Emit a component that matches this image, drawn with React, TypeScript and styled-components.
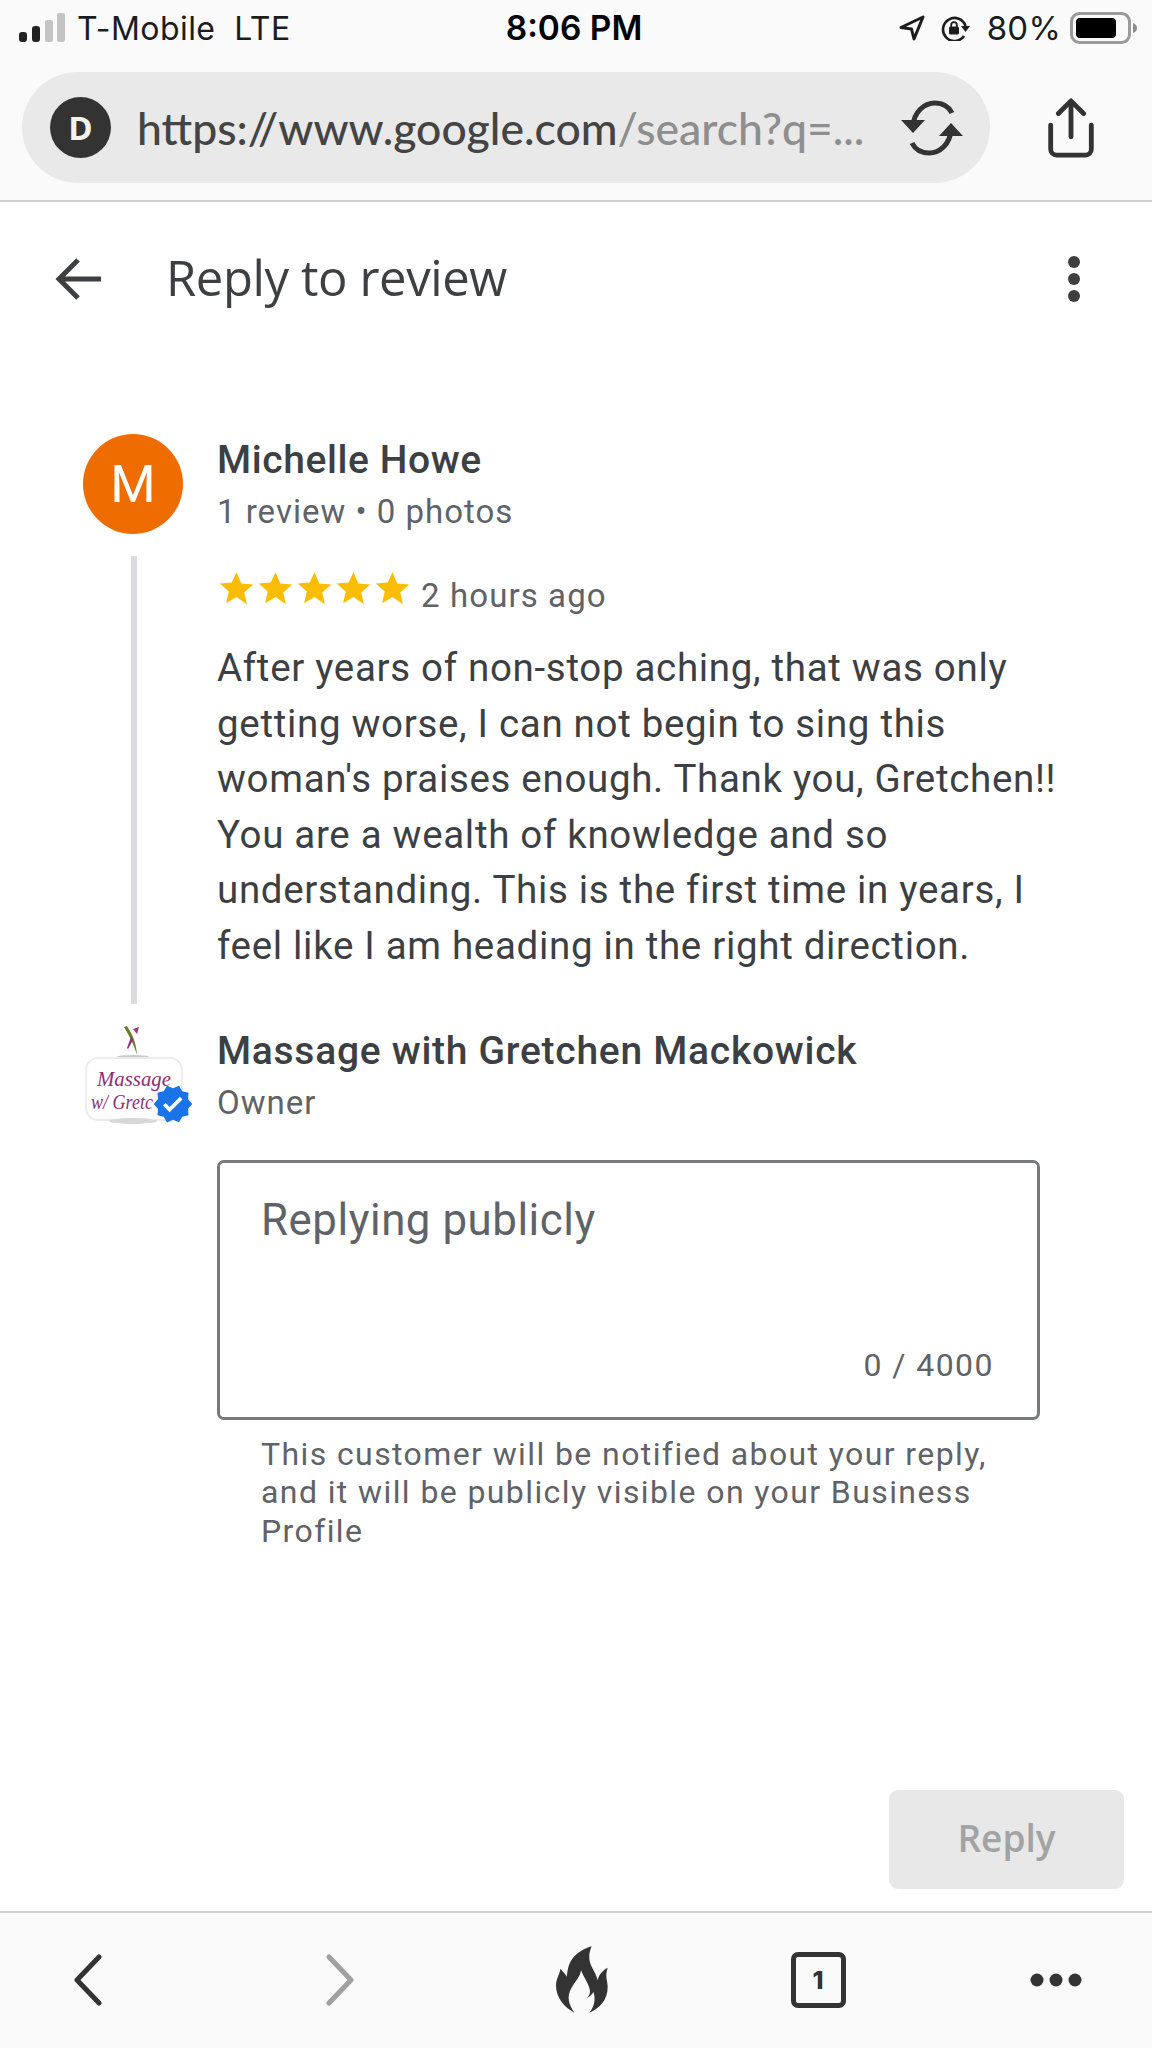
import React from "react";
import styled, { createGlobalStyle } from "styled-components";

const GlobalStyle = createGlobalStyle`
  html, body { margin: 0; padding: 0; background: #fff; }
  * { box-sizing: border-box; }
`;

const Page = styled.div`
  width: 1152px;
  height: 2048px;
  display: flex;
  flex-direction: column;
  overflow: hidden;
  background: #fff;
  font-family: Roboto, "Liberation Sans", sans-serif;
`;

const Chrome = styled.header`
  height: 202px;
  flex: none;
  background: #fafafa;
  border-bottom: 2px solid #cfcfcf;
  display: flex;
  flex-direction: column;
`;

const StatusBar = styled.div`
  height: 72px;
  display: grid;
  grid-template-columns: 1fr auto 1fr;
  align-items: center;
  padding: 0 15px 16px 19px;
  font-family: Inter, sans-serif;
  font-size: 32px;
  color: #1c1c1c;
`;

const StatusGroup = styled.div<{ $end?: boolean }>`
  display: flex;
  align-items: center;
  justify-content: ${(p) => (p.$end ? "flex-end" : "flex-start")};
  gap: ${(p) => (p.$end ? "16px" : "12px")};
`;

const Carrier = styled.span`
  letter-spacing: 0.45px;
  white-space: pre;
`;

const Percent = styled.span`
  font-size: 33px;
  letter-spacing: 0.2px;
`;

const BatteryIcon = styled.svg`
  margin-left: -7px;
`;

const Clock = styled.span`
  font-family: Inter, sans-serif;
  font-weight: 600;
  font-size: 33.5px;
  margin-left: -8px;
  color: #000;
`;

const UrlRow = styled.div`
  display: flex;
  align-items: center;
  padding-left: 22px;
`;

const UrlPill = styled.div`
  width: 968px;
  height: 111px;
  border-radius: 56px;
  background: #e9e9e9;
  display: flex;
  align-items: center;
  padding: 0 26px 0 28px;
`;

const SiteBadge = styled.div`
  width: 61px;
  height: 61px;
  flex: none;
  border-radius: 50%;
  background: #333;
  color: #f2f2f2;
  font-family: "Open Sans", sans-serif;
  font-weight: 700;
  font-size: 33px;
  display: flex;
  align-items: center;
  justify-content: center;
`;

const UrlText = styled.div`
  flex: 1;
  margin-left: 26px;
  font-family: Lato, sans-serif;
  font-size: 44.5px;
  font-weight: 500;
  color: #444;
  white-space: nowrap;
`;

const UrlMuted = styled.span`
  color: #8e8e8e;
`;

const ShareButton = styled.div`
  margin-left: 57px;
  width: 48px;
  display: flex;
`;

const TopBar = styled.div`
  height: 154px;
  flex: none;
  display: flex;
  align-items: center;
  padding: 0 72px 0 55px;
`;

const Title = styled.h1`
  flex: 1;
  margin: 0 0 5px 65px;
  font-family: "Open Sans", sans-serif;
  font-weight: 400;
  font-size: 49px;
  letter-spacing: -0.4px;
  color: #3c4043;
`;

const Content = styled.main`
  flex: 1;
  display: flex;
  flex-direction: column;
  padding: 78px 28px 22px 83px;
`;

const Row = styled.section`
  display: grid;
  grid-template-columns: 100px 1fr;
  column-gap: 34px;
`;

const OwnerRow = styled(Row)`
  margin-top: 21px;
`;

const Avatar = styled.div`
  width: 100px;
  height: 100px;
  border-radius: 50%;
  background: #ef6c00;
  color: #fff;
  font-size: 52px;
  display: flex;
  align-items: center;
  justify-content: center;
`;

const Rail = styled.div`
  display: flex;
  flex-direction: column;
  align-items: center;
`;

const RailLine = styled.div`
  flex: 1;
  width: 6px;
  margin: 22px 0 0 2px;
  background: #dadce0;
`;

const Name = styled.div`
  font-size: 39px;
  font-weight: 500;
  line-height: 52px;
  letter-spacing: 0.6px;
  color: #3c4043;
`;

const Meta = styled.div`
  font-size: 33px;
  line-height: 51px;
  letter-spacing: 1px;
  color: #5f6368;
`;

const RatingRow = styled.div`
  display: flex;
  align-items: center;
  margin-top: 35px;
`;

const Stars = styled.div`
  display: flex;
  gap: 6px;
  padding-left: 3px;
  margin-top: -16px;
`;

const TimeAgo = styled.span`
  margin-left: 12px;
  font-size: 33px;
  line-height: 48px;
  letter-spacing: 1.1px;
  color: #5f6368;
`;

const ReviewText = styled.p`
  margin: 20px 0 30px;
  font-size: 38.5px;
  line-height: 55.6px;
  letter-spacing: 0.68px;
  color: #3c4043;
  white-space: pre-line;
`;

const LogoWrap = styled.div`
  position: relative;
  width: 112px;
  height: 100px;
`;

const Verified = styled.div`
  position: absolute;
  right: 1px;
  bottom: 0;
  width: 42px;
  height: 42px;
`;

const OwnerName = styled(Name)`
  letter-spacing: 0.72px;
`;

const ReplyBox = styled.div`
  position: relative;
  width: 823px;
  height: 260px;
  margin-top: 32px;
  border: 3px solid #777a7d;
  border-radius: 7px;
  padding: 29px 41px;
`;

const Placeholder = styled.div`
  font-size: 43.8px;
  line-height: 56px;
  letter-spacing: 0.55px;
  color: #5f6368;
`;

const Counter = styled.div`
  position: absolute;
  right: 43px;
  bottom: 33px;
  font-size: 32px;
  letter-spacing: 1.45px;
  color: #5f6368;
`;

const Helper = styled.p`
  margin: 15px 0 0 44px;
  font-size: 32px;
  line-height: 38.5px;
  letter-spacing: 1.4px;
  color: #5f6368;
  white-space: pre-line;
`;

const Actions = styled.div`
  margin-top: auto;
  display: flex;
  justify-content: flex-end;
`;

const ReplyButton = styled.button`
  width: 235px;
  height: 99px;
  border: 0;
  border-radius: 9px;
  padding: 0 0 5px;
  background: #e8e8e8;
  color: #a3a3a3;
  font-family: "Open Sans", sans-serif;
  font-weight: 600;
  font-size: 37px;
`;

const BottomBar = styled.nav`
  height: 137px;
  flex: none;
  background: #fafafa;
  border-top: 2px solid #cfcfcf;
  display: grid;
  grid-template-columns: 175px 330px 153px 320px 156px;
  align-items: center;
  justify-items: center;
  padding-bottom: 2px;
`;

const TabsCount = styled.div`
  width: 55px;
  height: 56px;
  border: 5px solid #333;
  border-radius: 7px;
  color: #333;
  font-family: Inter, sans-serif;
  font-weight: 800;
  font-size: 25px;
  display: flex;
  align-items: center;
  justify-content: center;
`;

const LogoScript = styled.text`
  font-family: "Liberation Serif", serif;
  font-style: italic;
  fill: #8f2d78;
`;

const Star = () => (
  <svg width="33" height="33" viewBox="2 2 20 20">
    <path fill="#fbbc04" d="M12 2.2l2.9 6.7 7.3.7-5.5 4.8 1.6 7.1L12 17.1l-6.3 3.8 1.6-7.1-5.5-4.8 7.3-.7z" />
  </svg>
);

export default function App() {
  return (
    <Page>
      <GlobalStyle />
      <Chrome>
        <StatusBar>
          <StatusGroup>
            <svg width="46" height="30" viewBox="0 0 46 30">
              <rect x="0" y="19" width="8" height="10" rx="3" fill="#222" />
              <rect x="13" y="13" width="8" height="16" rx="3" fill="#222" />
              <rect x="26" y="7" width="8" height="22" rx="2" fill="#c4c4c4" />
              <rect x="38" y="0" width="8" height="29" rx="2" fill="#c4c4c4" />
            </svg>
            <Carrier>T-Mobile  LTE</Carrier>
          </StatusGroup>
          <Clock>8:06 PM</Clock>
          <StatusGroup $end>
            <svg width="26" height="26" viewBox="0 0 26 26">
              <path d="M24 2L2 12.5l10.5 1.5 2.5 10z" fill="none" stroke="#1c1c1c" strokeWidth="3" strokeLinejoin="round" />
            </svg>
            <svg width="30" height="26" viewBox="0 0 30 26">
              <path d="M23 21a11.5 11.5 0 1 1 1.5-10" fill="none" stroke="#1c1c1c" strokeWidth="2.6" />
              <path d="M20 11h9l-4.500 6z" fill="#1c1c1c" />
              <rect x="8" y="11.500" width="10" height="8" rx="1.500" fill="#1c1c1c" />
              <path d="M10.200 12v-2a2.800 2.800 0 0 1 5.600 0v2" fill="none" stroke="#1c1c1c" strokeWidth="1.800" />
            </svg>
            <Percent>80%</Percent>
            <BatteryIcon width="67" height="32" viewBox="0 0 67 32">
              <rect x="1.500" y="1.500" width="58" height="29" rx="8" fill="none" stroke="#9a9a9a" strokeWidth="3" />
              <rect x="6" y="6" width="40" height="20" rx="4" fill="#000" />
              <path d="M63 11c3 1 4 3 4 5s-1 4-4 5z" fill="#8c8c8c" />
            </BatteryIcon>
          </StatusGroup>
        </StatusBar>
        <UrlRow>
          <UrlPill>
            <SiteBadge>D</SiteBadge>
            <UrlText>
              https://www.google.com<UrlMuted>/search?q=...</UrlMuted>
            </UrlText>
            <svg width="64" height="58" viewBox="0 0 64 58" fill="none" stroke="#333" strokeWidth="5">
              <path d="M13 27C14 13 24 4 35 4c8 0 14 4 17 10" />
              <path d="M51 31c-1 14-11 23-22 23-8 0-14-4-17-10" />
              <path d="M1 21l12 13 12-13z" fill="#333" stroke="none" />
              <path d="M39 37l12-13 12 13z" fill="#333" stroke="none" />
            </svg>
          </UrlPill>
          <ShareButton>
            <svg width="48" height="60" viewBox="0 0 48 62" fill="none" stroke="#333" strokeWidth="5" strokeLinecap="round" strokeLinejoin="round">
              <path d="M24 40V4M11 16L24 3l13 13" />
              <path d="M3 28v25a6 6 0 0 0 6 6h30a6 6 0 0 0 6-6V28" />
            </svg>
          </ShareButton>
        </UrlRow>
      </Chrome>

      <TopBar>
        <svg width="46" height="42" viewBox="0 0 46 42" fill="none" stroke="#3c4043" strokeWidth="5">
          <path d="M46 21H5M23 2L4 21l19 19" />
        </svg>
        <Title>Reply to review</Title>
        <svg width="12" height="46" viewBox="0 0 12 46" fill="#3c4043">
          <circle cx="6" cy="6" r="6" />
          <circle cx="6" cy="23" r="6" />
          <circle cx="6" cy="40" r="6" />
        </svg>
      </TopBar>

      <Content>
        <Row>
          <Rail>
            <Avatar>M</Avatar>
            <RailLine />
          </Rail>
          <div>
            <Name>Michelle Howe</Name>
            <Meta>1 review • 0 photos</Meta>
            <RatingRow>
              <Stars>
                <Star />
                <Star />
                <Star />
                <Star />
                <Star />
              </Stars>
              <TimeAgo>2 hours ago</TimeAgo>
            </RatingRow>
            <ReviewText>
              {"After years of non-stop aching, that was only\ngetting worse, I can not begin to sing this\nwoman's praises enough. Thank you, Gretchen!!\nYou are a wealth of knowledge and so\nunderstanding. This is the first time in years, I\nfeel like I am heading in the right direction."}
            </ReviewText>
          </div>
        </Row>
        <OwnerRow>
          <LogoWrap>
            <svg width="100" height="100" viewBox="0 0 100 100">
              <ellipse cx="50" cy="32" rx="16" ry="2" fill="#c9c9c9" />
              <rect x="3" y="33" width="96" height="62" rx="12" fill="#fff" stroke="#ececec" strokeWidth="2" />
              <ellipse cx="50" cy="96" rx="24" ry="3" fill="#d8d8d8" />
              <path d="M44 1c5 8 9 15 10 29-3-10-7-18-13-28z" fill="#6d7a2c" />
              <path d="M56 2l-2 7-4-5z" fill="#a23a7d" />
              <path d="M48 12l-4 11 1 1 5-9z" fill="#8f2d78" />
              <LogoScript x="14" y="61" fontSize="22" textLength="74" lengthAdjust="spacingAndGlyphs">
                Massage
              </LogoScript>
              <LogoScript x="8" y="84" fontSize="22" textLength="62" lengthAdjust="spacingAndGlyphs">
                w/ Gretc
              </LogoScript>
            </svg>
            <Verified>
              <svg width="42" height="42" viewBox="0 0 24 24">
                <path
                  fill="#1a73e8"
                  d="M23 12l-2.440-2.790.340-3.690-3.610-.820-1.890-3.200L12 2.960 8.600 1.500 6.710 4.690 3.100 5.500l.340 3.700L1 12l2.440 2.790-.340 3.700 3.610.820L8.600 22.500l3.400-1.470 3.400 1.460 1.890-3.190 3.610-.820-.340-3.690L23 12z"
                />
                <path fill="#fff" d="M10.090 16.720l-3.800-3.810 1.480-1.480 2.320 2.330 5.850-5.870 1.480 1.480-7.330 7.350z" />
              </svg>
            </Verified>
          </LogoWrap>
          <div>
            <OwnerName>Massage with Gretchen Mackowick</OwnerName>
            <Meta>Owner</Meta>
            <ReplyBox>
              <Placeholder>Replying publicly</Placeholder>
              <Counter>0 / 4000</Counter>
            </ReplyBox>
            <Helper>
              {"This customer will be notified about your reply,\nand it will be publicly visible on your Business\nProfile"}
            </Helper>
          </div>
        </OwnerRow>
        <Actions>
          <ReplyButton>Reply</ReplyButton>
        </Actions>
      </Content>

      <BottomBar>
        <svg width="30" height="52" viewBox="0 0 30 52" fill="none" stroke="#333" strokeWidth="5" strokeLinecap="round" strokeLinejoin="round">
          <path d="M26 3L4 26l22 23" />
        </svg>
        <svg width="30" height="52" viewBox="0 0 30 52" fill="none" stroke="#a0a0a0" strokeWidth="5" strokeLinecap="round" strokeLinejoin="round">
          <path d="M4 3l22 23L4 49" />
        </svg>
        <svg width="52" height="68" viewBox="50 32 156 204" fill="#333">
          <path d="M157 33C125 42 98 62 88 92c-4 12-4 23-6 32-4-9-12-16-19-24-1 15-13 30-13 50 0 40 28 68 55 82-17-27-23-47-10-72 13-22 27-35 30-55 10 25 27 45 27 65 0 6-4 13-9 18 7-3 15-10 19-18 8 20 3 45-12 62 30-12 55-37 55-77 0-20-9-30 0-58-15 8-27 21-30 38-5-25-23-40-25-65-1-15 2-25 7-37z" />
        </svg>
        <TabsCount>1</TabsCount>
        <svg width="52" height="14" viewBox="0 0 52 14" fill="#333">
          <circle cx="7" cy="7" r="6.500" />
          <circle cx="26" cy="7" r="6.500" />
          <circle cx="45" cy="7" r="6.500" />
        </svg>
      </BottomBar>
    </Page>
  );
}
